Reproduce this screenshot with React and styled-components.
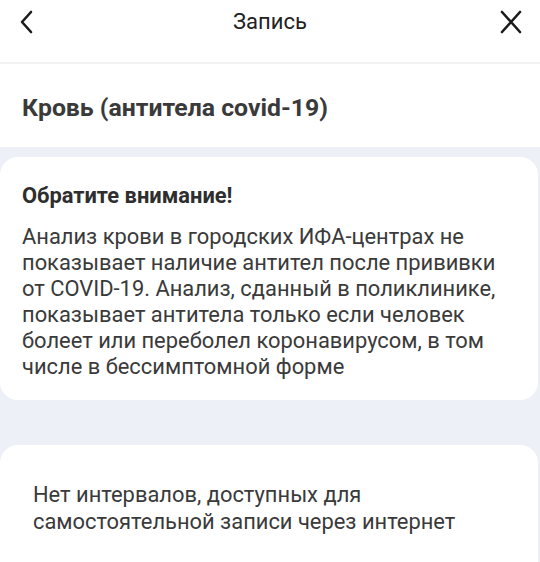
import styled, { createGlobalStyle } from "styled-components";

const GlobalStyle = createGlobalStyle`
    html, body {
        margin: 0;
        padding: 0;
        background: #ffffff;
        font-family: Roboto, "Noto Sans", sans-serif;
        -webkit-font-smoothing: antialiased;
    }
`;

const Page = styled.div`
    width: 540px;
    height: 562px;
    overflow: hidden;
    display: flex;
    flex-direction: column;
    background: #edf0f7;
`;

const Header = styled.header`
    height: 64px;
    flex-shrink: 0;
    display: grid;
    grid-template-columns: 60px 1fr 60px;
    align-items: start;
    background: #ffffff;
    border-bottom: 2px solid #f3f3f3;
    box-sizing: border-box;
`;

const IconButton = styled.button`
    display: flex;
    align-items: center;
    justify-content: ${(props) => (props.$end ? "flex-end" : "flex-start")};
    height: 44px;
    padding: 0 ${(props) => (props.$end ? "17px" : "0")} 0 ${(props) => (props.$end ? "0" : "19px")};
    border: none;
    background: none;
    color: #1b1b1b;
`;

const HeaderTitle = styled.h1`
    margin: 0;
    height: 44px;
    line-height: 44px;
    text-align: center;
    font-size: 22px;
    font-weight: 400;
    color: #222222;
`;

const TitleSection = styled.section`
    background: #ffffff;
    height: 83px;
    flex-shrink: 0;
    padding: 29px 22px 0;
    box-sizing: border-box;
`;

const Title = styled.h2`
    margin: 0;
    font-size: 24.8px;
    line-height: 30px;
    font-weight: 700;
    color: #3a3a3a;
`;

const Card = styled.section`
    background: #ffffff;
    margin: ${(props) => props.$top}px 2px 0 0;
    border-radius: 18px;
    padding: ${(props) => props.$pad};
    box-sizing: border-box;
    height: ${(props) => props.$height};
    flex-shrink: 0;
`;

const NoticeTitle = styled.h3`
    margin: 0 0 15px;
    font-size: 21.9px;
    font-weight: 700;
    color: #2e2e2e;
    line-height: 26px;
`;

const Body = styled.p`
    margin: 0;
    font-size: 21.9px;
    line-height: ${(props) => props.$lh || "26px"};
    color: #3a3a3a;
`;

function ChevronLeft() {
    return (
        <svg width="16" height="24" viewBox="0 0 16 24" fill="none">
            <path d="M12 2 L3 12 L12 22" stroke="currentColor" strokeWidth="2.6" strokeLinecap="round" strokeLinejoin="round" />
        </svg>
    );
}

function CloseIcon() {
    return (
        <svg width="24" height="24" viewBox="0 0 24 24" fill="none">
            <path d="M3 2 L21 22 M21 2 L3 22" stroke="currentColor" strokeWidth="2.6" strokeLinecap="round" />
        </svg>
    );
}

export default function App() {
    return (
        <>
            <GlobalStyle />
            <Page>
                <Header>
                    <IconButton aria-label="Назад">
                        <ChevronLeft />
                    </IconButton>
                    <HeaderTitle>Запись</HeaderTitle>
                    <IconButton $end aria-label="Закрыть">
                        <CloseIcon />
                    </IconButton>
                </Header>
                <TitleSection>
                    <Title>Кровь (антитела covid-19)</Title>
                </TitleSection>
                <Card $top={10} $pad="26px 28px 0 22px" $height="243px">
                    <NoticeTitle>Обратите внимание!</NoticeTitle>
                    <Body>
                        Анализ крови в городских ИФА-центрах не показывает наличие антител после прививки
                        от COVID-19. Анализ, сданный в поликлинике, показывает антитела только если человек
                        болеет или переболел коронавирусом, в том числе в бессимптомной форме
                    </Body>
                </Card>
                <Card $top={45} $pad="36px 33px 0" $height="140px">
                    <Body $lh="27px">
                        Нет интервалов, доступных для самостоятельной записи через интернет
                    </Body>
                </Card>
            </Page>
        </>
    );
}
